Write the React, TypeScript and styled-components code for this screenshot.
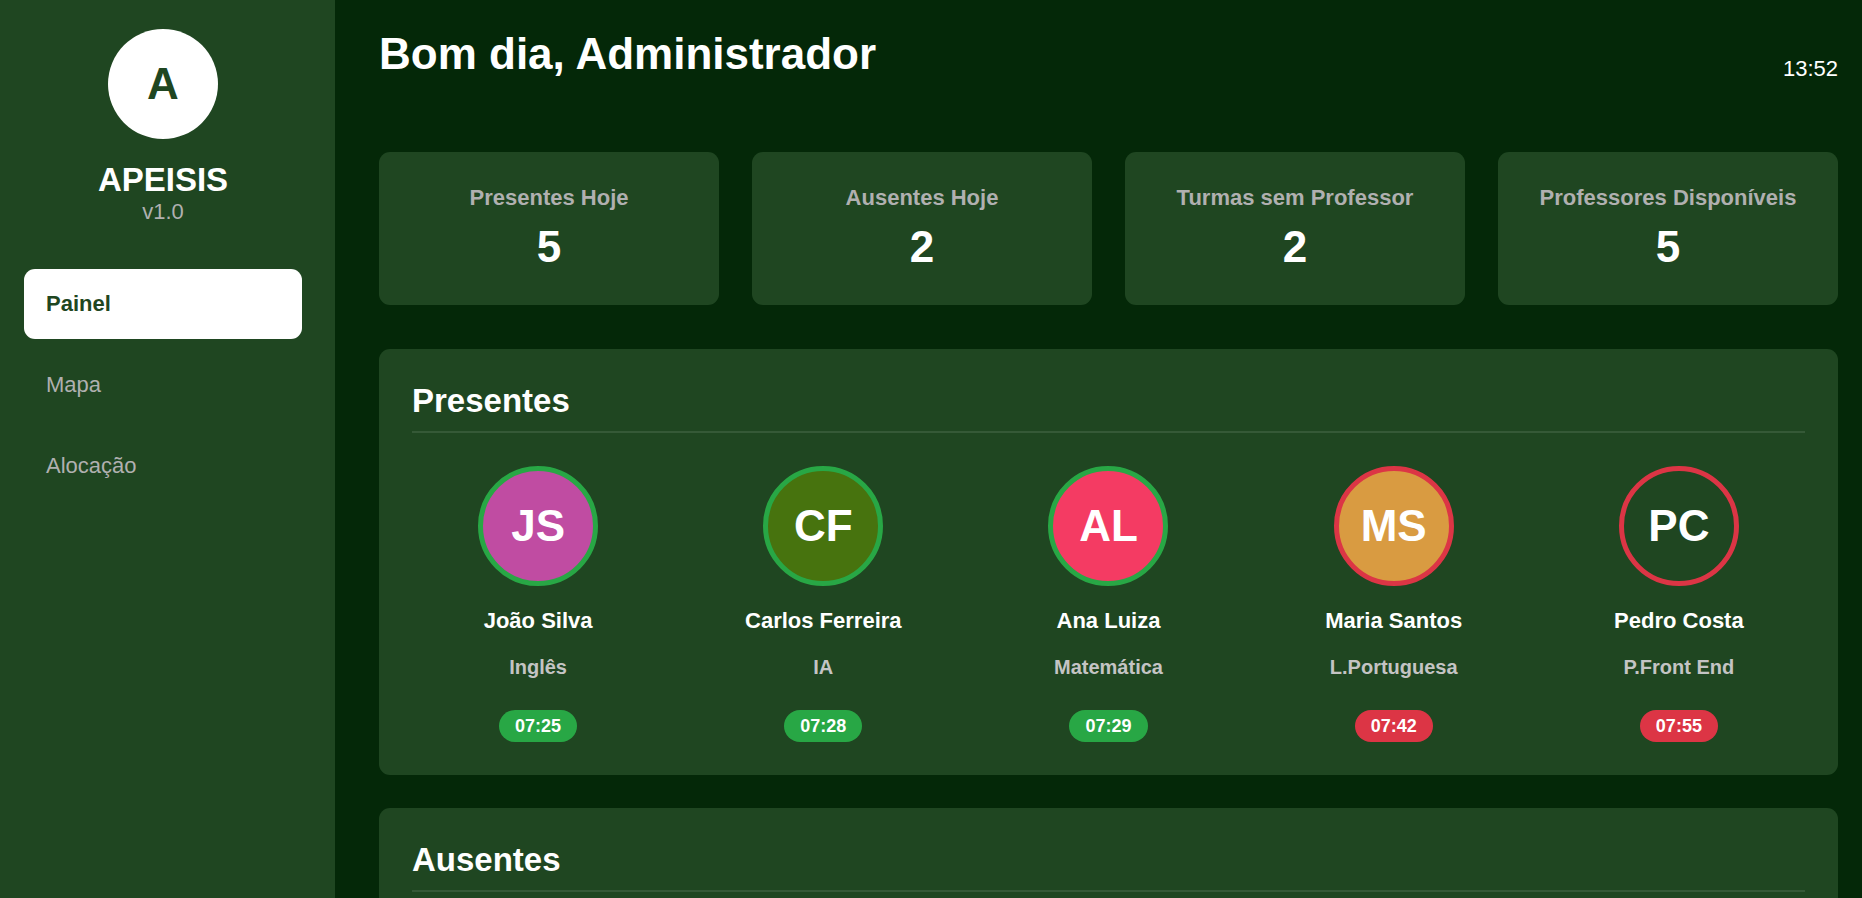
import React from "react";
import styled, { createGlobalStyle } from "styled-components";

const GlobalStyle = createGlobalStyle`
  *, *::before, *::after { box-sizing: border-box; }
  body {
    margin: 0;
    background: #042808;
    color: #ffffff;
    font-family: Arial, "Liberation Sans", sans-serif;
    font-size: 22px;
    line-height: 26px;
  }
  h1, h2, h3, p, ul, dl, dd { margin: 0; padding: 0; }
  ul { list-style: none; }
`;

const Layout = styled.div`
  display: flex;
  height: 100vh;
  overflow: hidden;
`;

const Sidebar = styled.aside`
  flex: 0 0 335px;
  padding: 29px 33px 29px 24px;
  background: #1f4621;
`;

const Brand = styled.div`
  display: flex;
  flex-direction: column;
  align-items: center;
  margin-bottom: 44px;
`;

const Logo = styled.div`
  display: flex;
  align-items: center;
  justify-content: center;
  width: 110px;
  height: 110px;
  margin-bottom: 22px;
  border-radius: 50%;
  background: #ffffff;
  color: #1f4621;
  font-size: 44px;
  line-height: 50px;
  font-weight: bold;
`;

const BrandName = styled.p`
  font-size: 33px;
  line-height: 38px;
  font-weight: bold;
`;

const Version = styled.p`
  color: #b0b0b0;
`;

const Menu = styled.ul`
  display: flex;
  flex-direction: column;
  gap: 11px;
`;

const MenuLink = styled.a<{ $active?: boolean }>`
  display: block;
  padding: 22px;
  border-radius: 11px;
  text-decoration: none;
  background: ${({ $active }) => ($active ? "#ffffff" : "transparent")};
  color: ${({ $active }) => ($active ? "#1f4621" : "#b0b0b0")};
  font-weight: ${({ $active }) => ($active ? "bold" : "normal")};
`;

const Main = styled.main`
  flex: 1;
  min-width: 0;
  padding: 29px 24px 33px 44px;
  overflow-y: auto;
  scrollbar-width: none;
`;

const Header = styled.header`
  display: flex;
  align-items: center;
  justify-content: space-between;
  margin-bottom: 44px;
`;

const Greeting = styled.h1`
  padding-bottom: 29px;
  font-size: 44px;
  line-height: 50px;
`;

const Stats = styled.dl`
  display: grid;
  grid-template-columns: repeat(4, 1fr);
  gap: 33px;
  margin-bottom: 44px;
`;

const Stat = styled.div`
  padding: 33px;
  border-radius: 11px;
  background: #1f4621;
  text-align: center;
  white-space: nowrap;
`;

const StatLabel = styled.dt`
  margin-bottom: 11px;
  color: #b0b0b0;
  font-weight: bold;
`;

const StatValue = styled.dd`
  font-size: 44px;
  line-height: 50px;
  font-weight: bold;
`;

const Panel = styled.section`
  margin-bottom: 33px;
  padding: 33px;
  border-radius: 11px;
  background: #1f4621;
`;

const PanelTitle = styled.h2`
  margin-bottom: 33px;
  padding-bottom: 11px;
  border-bottom: 2px solid #355937;
  font-size: 33px;
  line-height: 38px;
`;

const Teachers = styled.ul`
  display: grid;
  grid-template-columns: repeat(5, 1fr);
  gap: 33px;
`;

const Teacher = styled.li`
  display: flex;
  flex-direction: column;
  align-items: center;
  text-align: center;
`;

const Avatar = styled.div<{ $fill: string; $late: boolean }>`
  display: flex;
  align-items: center;
  justify-content: center;
  width: 120px;
  height: 120px;
  margin-bottom: 22px;
  border: 5px solid ${({ $late }) => ($late ? "#dc3545" : "#28a745")};
  border-radius: 50%;
  background: ${({ $fill }) => $fill};
  font-size: 44px;
  line-height: 50px;
  font-weight: bold;
`;

const TeacherName = styled.h3`
  margin-bottom: 22px;
  font-size: 22px;
`;

const Subject = styled.p`
  margin-bottom: 31px;
  color: #c4c4c4;
  font-size: 20px;
  line-height: 23px;
  font-weight: bold;
`;

const Arrival = styled.time<{ $late: boolean }>`
  padding: 6px 16px;
  border-radius: 16px;
  background: ${({ $late }) => ($late ? "#dc3545" : "#28a745")};
  font-size: 18px;
  line-height: 20px;
  font-weight: bold;
`;

const menu = ["Painel", "Mapa", "Alocação"];

const stats = [
  { label: "Presentes Hoje", value: 5 },
  { label: "Ausentes Hoje", value: 2 },
  { label: "Turmas sem Professor", value: 2 },
  { label: "Professores Disponíveis", value: 5 },
];

const present = [
  { initials: "JS", name: "João Silva", subject: "Inglês", time: "07:25", fill: "#c04ca2", late: false },
  { initials: "CF", name: "Carlos Ferreira", subject: "IA", time: "07:28", fill: "#47730e", late: false },
  { initials: "AL", name: "Ana Luiza", subject: "Matemática", time: "07:29", fill: "#f43b63", late: false },
  { initials: "MS", name: "Maria Santos", subject: "L.Portuguesa", time: "07:42", fill: "#d99b41", late: true },
  { initials: "PC", name: "Pedro Costa", subject: "P.Front End", time: "07:55", fill: "transparent", late: true },
];

export default function App() {
  return (
    <>
      <GlobalStyle />
      <Layout>
        <Sidebar>
          <Brand>
            <Logo>A</Logo>
            <BrandName>APEISIS</BrandName>
            <Version>v1.0</Version>
          </Brand>
          <nav>
            <Menu>
              {menu.map((item, i) => (
                <li key={item}>
                  <MenuLink href="#" $active={i === 0} aria-current={i === 0 ? "page" : undefined}>
                    {item}
                  </MenuLink>
                </li>
              ))}
            </Menu>
          </nav>
        </Sidebar>
        <Main>
          <Header>
            <Greeting>Bom dia, Administrador</Greeting>
            <time>13:52</time>
          </Header>
          <Stats>
            {stats.map((s) => (
              <Stat key={s.label}>
                <StatLabel>{s.label}</StatLabel>
                <StatValue>{s.value}</StatValue>
              </Stat>
            ))}
          </Stats>
          <Panel>
            <PanelTitle>Presentes</PanelTitle>
            <Teachers>
              {present.map((t) => (
                <Teacher key={t.name}>
                  <Avatar $fill={t.fill} $late={t.late}>{t.initials}</Avatar>
                  <TeacherName>{t.name}</TeacherName>
                  <Subject>{t.subject}</Subject>
                  <Arrival $late={t.late}>{t.time}</Arrival>
                </Teacher>
              ))}
            </Teachers>
          </Panel>
          <Panel>
            <PanelTitle>Ausentes</PanelTitle>
          </Panel>
        </Main>
      </Layout>
    </>
  );
}
